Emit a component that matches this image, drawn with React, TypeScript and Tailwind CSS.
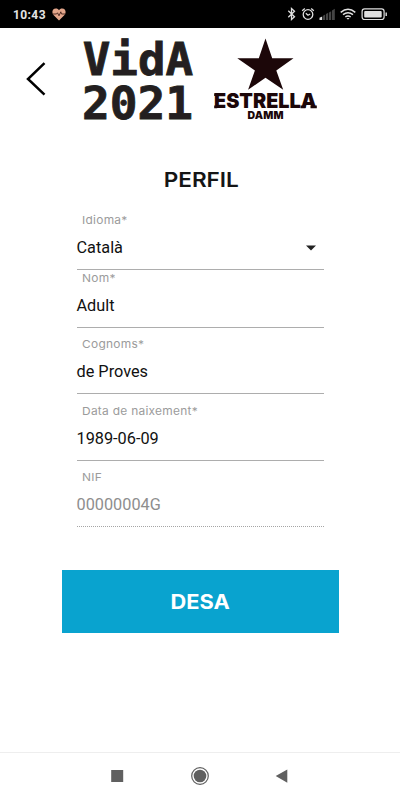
import type { ReactNode } from 'react'

function StatusBar() {
  return (
    <div className="h-7 bg-black flex items-center justify-between pl-[13px] pr-[12px] text-[#e4e4e4]">
      <div className="flex items-center gap-[6px]">
        <span className="font-['Roboto',sans-serif] text-[12px] font-bold leading-7 tracking-[0.4px] pt-px">10:43</span>
        <svg width="14" height="13" viewBox="0 0 14 13">
          <path d="M7 12.4 1.5 7C-.6 4.500.3.6 3.800.5 5.300.5 6.300 1.200 7 2.200 7.700 1.200 8.700.5 10.200.5c3.500.1 4.400 4 2.300 6.500z" fill="#e3a68b" />
          <path d="M.5 6h4l1-1.200 1.500 3 1.800-4L9.500 6h4" fill="none" stroke="#43201a" strokeWidth="0.9" />
        </svg>
      </div>
      <svg width="102" height="16" viewBox="286 6 102 16" fill="none" stroke="#e0e0e0">
        <path d="m288.300 10.800 6.200 6-3 2.700v-11l3 2.700-6.200 6" strokeWidth="1.300" />
        <circle cx="308" cy="14.500" r="4.800" strokeWidth="1.300" />
        <path d="m302.200 10.800 2.600-2.200M313.800 10.800l-2.600-2.200" strokeWidth="1.300" />
        <path d="m305.800 13.200 2.200 2 2.200-1.200" strokeWidth="1.200" />
        <g stroke="none">
          <path d="M319.500 20v-2.200l2.700-1.300V20z" fill="#e0e0e0" />
          <path d="M323 20v-4.200l2.200-1.200V20zM326 20v-5.900l2.200-1.300V20zM329 20v-7.600l2.200-1.200V20zM332 20v-9.400l2.800-1.800V20z" fill="#454545" />
        </g>
        <path d="M340.700 12.300q7.300-6 14.600 0M343 14.700q5-4 10 0M345.300 17q2.700-2 5.400 0" strokeWidth="1.500" />
        <path d="m346.500 18 1.500 1.700 1.500-1.700z" fill="#e0e0e0" stroke="none" />
        <rect x="362.100" y="8.900" width="22" height="10.600" rx="2.500" strokeWidth="1.200" />
        <rect x="364.200" y="11" width="17.500" height="6.400" rx="1" fill="#e0e0e0" stroke="none" />
        <path d="M386.200 12.500v3.500" strokeWidth="1.400" />
      </svg>
    </div>
  )
}

function VidaLogo() {
  return (
    <svg width="112" height="84" viewBox="82 38 112 84" fill="#231f20" className="overflow-visible">
      <g fontFamily="'DejaVu Sans Mono', monospace" fontWeight="700" stroke="#231f20" strokeWidth="0.8">
        <text x="82.700" y="74.700" fontSize="44" textLength="110.500" lengthAdjust="spacingAndGlyphs">VidA</text>
        <text x="82" y="118.500" fontSize="44.500" textLength="111" lengthAdjust="spacingAndGlyphs">2021</text>
      </g>
    </svg>
  )
}

function EstrellaLogo() {
  return (
    <svg width="106" height="84" viewBox="212 38 106 84" fill="#1c0709" className="overflow-visible">
      <path d="m265.500 38.500 6.700 19.700h21.300L276.300 70.500l6.900 19.200-17.700-12-17.400 12 6.800-19.200-17.600-12.300h21.500z" />
      <g fontFamily="'Inter', sans-serif" fontWeight="900">
        <text x="214" y="108.200" textLength="102.500" lengthAdjust="spacingAndGlyphs" fontSize="20.500">
          ESTRELLA
        </text>
        <text x="247.500" y="119.200" textLength="36" fontSize="10.500">
          DAMM
        </text>
      </g>
      {/* slab feet of the wordmark */}
      <path d="M214.200 93.300h3v2.600h-3zM214.200 105.600h3v2.600h-3zM310.500 105.600h6.300v2.600h-6.300zM300.500 105.600h5v2.600h-5z" />
    </svg>
  )
}

function Field({ label, children, disabled }: { label: string; children: ReactNode; disabled?: boolean }) {
  return (
    <div className="w-[247px]">
      <div className="ml-[5px] w-fit h-4 leading-[17px] text-[11px] text-[#9b9b9b] whitespace-nowrap tracking-[0.25px] origin-left scale-x-[1.085]">
        {label}
      </div>
      <div
        className={`h-[42px] flex items-center justify-between pb-px border-b font-['Roboto',sans-serif] text-[16.3px] leading-6 ${
          disabled ? 'border-dotted border-[#a5a5a5] text-[#8e8e8e]' : 'border-[#adadad] text-[#111]'
        }`}
      >
        {children}
      </div>
    </div>
  )
}

export default function App() {
  return (
    <div className="w-full h-[800px] bg-white flex flex-col font-['Inter','Open_Sans',sans-serif]">
      <StatusBar />

      <header className="flex pt-[10px] pl-[25px]">
        <button type="button" aria-label="Enrere" className="mt-[23px] w-[22px] h-9">
          <svg width="22" height="36" viewBox="0 0 22 36" fill="none" stroke="#000" strokeWidth="2.500">
            <path d="M19.500 2.200 3 18l16.500 15.700" />
          </svg>
        </button>
        <div className="ml-[35px]">
          <VidaLogo />
        </div>
        <div className="ml-[18px]">
          <EstrellaLogo />
        </div>
      </header>

      <main className="flex-1 flex flex-col items-center">
        <h1 className="mt-[44px] h-7 leading-7 text-[20.5px] font-semibold text-[#151515] pl-[2px] scale-x-[1.1]">PERFIL</h1>

        <form className="mt-[18px] flex flex-col">
          <Field label="Idioma*">
            <span>Català</span>
            <svg width="10" height="6" viewBox="0 0 10 6" className="mr-[8px]">
              <path d="M0 .5h10L5 5.500z" fill="#222" />
            </svg>
          </Field>
          <Field label="Nom*">Adult</Field>
          <div className="mt-2">
            <Field label="Cognoms*">de Proves</Field>
          </div>
          <div className="mt-[9px]">
            <Field label="Data de naixement*">1989-06-09</Field>
          </div>
          <div className="mt-2">
            <Field label="NIF" disabled>00000004G</Field>
          </div>
        </form>

        <button type="button" className="mt-[43px] w-[277px] h-[63px] bg-[#09a3cf] text-white text-[20px] font-bold">
          <span className="inline-block scale-x-[1.09]">DESA</span>
        </button>
      </main>

      <nav className="h-12 border-t border-[#eeeeee] flex justify-center">
        <svg width="180" height="47" viewBox="110 753 180 47" fill="#606060">
          <path d="M111.200 770h12v12h-12zM287.300 769.500v13.200L275.700 776z" />
          <circle cx="200" cy="776" r="6.300" />
          <circle cx="200" cy="776" r="8.300" fill="none" stroke="#606060" strokeWidth="1.200" />
        </svg>
      </nav>
    </div>
  )
}
